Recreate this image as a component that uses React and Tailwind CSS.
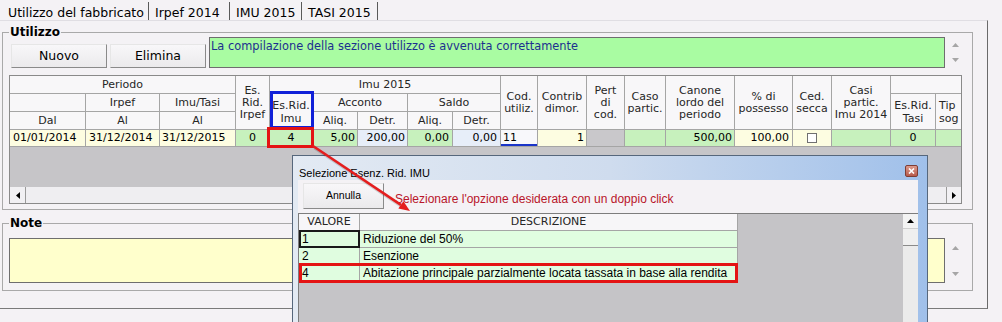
import React from "react";

const Tri = ({ dir, c = "#000", w = 7, h = 4 }) => {
  let d = "";
  if (dir === "up") d = `M0 ${h} L${w / 2} 0 L${w} ${h}Z`;
  if (dir === "down") d = `M0 0 L${w / 2} ${h} L${w} 0Z`;
  if (dir === "left") d = `M${w} 0 L0 ${h / 2} L${w} ${h}Z`;
  if (dir === "right") d = `M0 0 L${w} ${h / 2} L0 ${h}Z`;
  return (
    <svg width={w} height={h} viewBox={`0 0 ${w} ${h}`} className="block">
      <path d={d} fill={c} />
    </svg>
  );
};

const HC =
  "bg-[#f8f7f9] flex items-center justify-center text-center leading-[12px] text-[#262626]";
const DC = "flex items-center leading-[16px] text-black";

function Btn({ className, children }) {
  return (
    <div
      className={
        "flex items-center justify-center bg-linear-to-b from-[#f8f7f9] to-[#ebeaec] border border-t-[#e6e6e6] border-l-[#e6e6e6] border-r-[#8a8a8a] border-b-[#8a8a8a] " +
        className
      }
    >
      {children}
    </div>
  );
}

function Tabs() {
  return (
    <div className="flex h-[20px] text-[12.5px] leading-[15px] text-black">
      <div className="w-[148px] pl-[8px] pt-[5px] whitespace-nowrap">Utilizzo del fabbricato</div>
      <div className="w-px h-[18px] mt-[2px] bg-[#5a5a5a]" />
      <div className="w-[80px] pl-[6px] pt-[5px] whitespace-nowrap">Irpef 2014</div>
      <div className="w-px h-[18px] mt-[2px] bg-[#5a5a5a]" />
      <div className="w-[71px] pl-[6px] pt-[5px] whitespace-nowrap">IMU 2015</div>
      <div className="w-px h-[18px] mt-[2px] bg-[#5a5a5a]" />
      <div className="w-[75px] pl-[6px] pt-[5px] whitespace-nowrap">TASI 2015</div>
      <div className="w-px h-[18px] mt-[2px] bg-[#5a5a5a]" />
    </div>
  );
}

function DataGrid() {
  return (
    <div className="relative w-[953px] h-[129px] border border-[#8a8a8a] flex flex-col overflow-hidden">
      <div className="grid gap-px bg-[#a5a5a5] grid-cols-[75px_73px_75px_33px_42px_44px_49px_44px_47px_36px_48px_37px_40px_68px_57px_38px_58px_44px_25px] grid-rows-[17px_17px_17px_16px] text-[11px] shrink-0">
        <div className={`${HC} col-start-1 col-end-4 row-start-1 row-end-2`}>Periodo</div>
        <div className={`${HC} col-start-4 col-end-5 row-start-1 row-end-4`}>Es.<br />Rid.<br />Irpef</div>
        <div className={`${HC} col-start-5 col-end-10 row-start-1 row-end-2`}>Imu 2015</div>
        <div className={`${HC} col-start-10 col-end-11 row-start-1 row-end-4`}>Cod.<br />utiliz.</div>
        <div className={`${HC} col-start-11 col-end-12 row-start-1 row-end-4`}>Contrib<br />dimor.</div>
        <div className={`${HC} col-start-12 col-end-13 row-start-1 row-end-4`}>Pert<br />di<br />cod.</div>
        <div className={`${HC} col-start-13 col-end-14 row-start-1 row-end-4`}>Caso<br />partic.</div>
        <div className={`${HC} col-start-14 col-end-15 row-start-1 row-end-4`}>Canone<br />lordo del<br />periodo</div>
        <div className={`${HC} col-start-15 col-end-16 row-start-1 row-end-4`}>% di<br />possesso</div>
        <div className={`${HC} col-start-16 col-end-17 row-start-1 row-end-4`}>Ced.<br />secca</div>
        <div className={`${HC} col-start-17 col-end-18 row-start-1 row-end-4`}>Casi<br />partic.<br />Imu 2014</div>
        <div className={`${HC} col-start-18 col-end-20 row-start-1 row-end-2`}></div>

        <div className={`${HC} col-start-1 col-end-2 row-start-2 row-end-3`}></div>
        <div className={`${HC} col-start-2 col-end-3 row-start-2 row-end-3`}>Irpef</div>
        <div className={`${HC} col-start-3 col-end-4 row-start-2 row-end-3`}>Imu/Tasi</div>
        <div className={`${HC} col-start-5 col-end-6 row-start-2 row-end-4 leading-[13px]`}>Es.Rid.<br />Imu</div>
        <div className={`${HC} col-start-6 col-end-8 row-start-2 row-end-3`}>Acconto</div>
        <div className={`${HC} col-start-8 col-end-10 row-start-2 row-end-3`}>Saldo</div>
        <div className={`${HC} col-start-18 col-end-19 row-start-2 row-end-4 leading-[13px]`}>Es.Rid.<br />Tasi</div>
        <div className={`${HC} col-start-19 col-end-20 row-start-2 row-end-4 leading-[13px] !justify-start !text-left pl-[3px] whitespace-nowrap`}>Tip<br />sog</div>

        <div className={`${HC} col-start-1 col-end-2 row-start-3 row-end-4`}>Dal</div>
        <div className={`${HC} col-start-2 col-end-3 row-start-3 row-end-4`}>Al</div>
        <div className={`${HC} col-start-3 col-end-4 row-start-3 row-end-4`}>Al</div>
        <div className={`${HC} col-start-6 col-end-7 row-start-3 row-end-4`}>Aliq.</div>
        <div className={`${HC} col-start-7 col-end-8 row-start-3 row-end-4`}>Detr.</div>
        <div className={`${HC} col-start-8 col-end-9 row-start-3 row-end-4`}>Aliq.</div>
        <div className={`${HC} col-start-9 col-end-10 row-start-3 row-end-4`}>Detr.</div>

        <div className={`${DC} col-start-1 col-end-2 row-start-4 row-end-5 bg-[#fdfde1] pl-[3px]`}>01/01/2014</div>
        <div className={`${DC} col-start-2 col-end-3 row-start-4 row-end-5 bg-[#fdfde1] pl-[3px]`}>31/12/2014</div>
        <div className={`${DC} col-start-3 col-end-4 row-start-4 row-end-5 bg-[#fdfde1] pl-[2px]`}>31/12/2015</div>
        <div className={`${DC} col-start-4 col-end-5 row-start-4 row-end-5 bg-[#c7f1bd] justify-center`}>0</div>
        <div className={`${DC} col-start-5 col-end-6 row-start-4 row-end-5 bg-[#c7f1bd] justify-center`}>4</div>
        <div className={`${DC} col-start-6 col-end-7 row-start-4 row-end-5 bg-[#c7f1bd] justify-end pr-[2px]`}>5,00</div>
        <div className={`${DC} col-start-7 col-end-8 row-start-4 row-end-5 bg-[#e7eef9] justify-end pr-[2px]`}>200,00</div>
        <div className={`${DC} col-start-8 col-end-9 row-start-4 row-end-5 bg-[#c7f1bd] justify-end pr-[3px]`}>0,00</div>
        <div className={`${DC} col-start-9 col-end-10 row-start-4 row-end-5 bg-[#e7eef9] justify-end pr-[3px]`}>0,00</div>
        <div className={`${DC} col-start-10 col-end-11 row-start-4 row-end-5 bg-[#f8f8fb] pl-[2px] shadow-[inset_0_-2px_0_#1a35c8]`}>11</div>
        <div className={`${DC} col-start-11 col-end-12 row-start-4 row-end-5 bg-[#fdfde1] justify-end pr-[2px]`}>1</div>
        <div className={`${DC} col-start-12 col-end-13 row-start-4 row-end-5 bg-[#c9c8cb]`}></div>
        <div className={`${DC} col-start-13 col-end-14 row-start-4 row-end-5 bg-[#c7f1bd]`}></div>
        <div className={`${DC} col-start-14 col-end-15 row-start-4 row-end-5 bg-[#c7f1bd] justify-end pr-[2px]`}>500,00</div>
        <div className={`${DC} col-start-15 col-end-16 row-start-4 row-end-5 bg-[#fdfde1] justify-end pr-[3px]`}>100,00</div>
        <div className={`${DC} col-start-16 col-end-17 row-start-4 row-end-5 bg-[#fdfde1] justify-center`}>
          <div className="w-[10px] h-[10px] border border-[#707070] bg-white" />
        </div>
        <div className={`${DC} col-start-17 col-end-18 row-start-4 row-end-5 bg-[#c7f1bd]`}></div>
        <div className={`${DC} col-start-18 col-end-19 row-start-4 row-end-5 bg-[#c7f1bd] justify-center`}>0</div>
        <div className={`${DC} col-start-19 col-end-20 row-start-4 row-end-5 bg-[#c7f1bd]`}></div>
      </div>
      <div className="h-px bg-[#a5a5a5] shrink-0" />
      <div className="flex-1 bg-[#c6c5c8]" />
      <div className="h-[16px] flex bg-[#efeef1] shrink-0">
        <div className="w-[16px] h-full flex items-center justify-center border-r border-[#9a9a9a] bg-[#f1f0f3]">
          <Tri dir="left" w={4} h={7} />
        </div>
        <div className="flex-1" />
        <div className="w-[15px] h-full flex items-center justify-center border-l border-[#9a9a9a] bg-[#f1f0f3]">
          <Tri dir="right" w={4} h={7} />
        </div>
      </div>

      <div className="absolute left-[260px] top-[15px] w-[44px] h-[38px] border-[3px] border-[#1020d8]" />
      <div className="absolute left-[257px] top-[51px] w-[47px] h-[21px] border-[3px] border-[#e41414]" />
    </div>
  );
}

function Dialog() {
  return (
    <div className="absolute left-[292px] top-[155px] w-[636px] h-[200px] border border-[#56677c] bg-linear-to-r from-[#e3eaf3] via-[#cfdcee] to-[#a0c0ea] flex flex-col">
      <div className="h-[24px] flex items-start shrink-0">
        <div className="flex-1 pl-[6px] pt-[10px] text-[11px] leading-[14px] font-['Liberation_Sans',sans-serif] text-black whitespace-nowrap">
          Selezione Esenz. Rid. IMU
        </div>
        <div className="mt-[9px] mr-[9px] w-[13px] h-[12px] rounded-[2px] border border-[#7e3d33] bg-linear-to-b from-[#dc9a8c] to-[#b85a4b] flex items-center justify-center">
          <svg width="7" height="6" viewBox="0 0 7 6" className="block">
            <path d="M1 0.5 L6 5.5 M6 0.5 L1 5.5" stroke="#fff" strokeWidth="1.6" />
          </svg>
        </div>
      </div>
      <div className="flex-1 ml-[5px] mr-[9px] bg-[#f4f2f5] flex flex-col">
        <div className="h-[33px] flex items-start shrink-0">
          <Btn className="ml-[5px] mt-[3px] w-[81px] h-[26px] text-[10.5px] font-['Liberation_Sans',sans-serif] text-black">
            Annulla
          </Btn>
          <span className="ml-[11px] mt-[12px] text-[12px] leading-[14px] font-['Liberation_Sans',sans-serif] text-[#b8152a] whitespace-nowrap">
            Selezionare l'opzione desiderata con un doppio click
          </span>
        </div>
        <div className="flex-1 flex">
          <div className="relative flex-1 bg-[#c5c4c7] border-t border-l border-[#7d7d7d]">
            <div className="w-[439px] flex flex-col">
              <div className="h-[17px] flex border-b border-[#a5a5a5] bg-[#f7f6f8] text-[11px] leading-[16px] text-[#262626]">
                <div className="w-[61px] border-r border-[#a5a5a5] text-center">VALORE</div>
                <div className="flex-1 border-r border-[#a5a5a5] text-center">DESCRIZIONE</div>
              </div>
              {[
                ["1", "Riduzione del 50%"],
                ["2", "Esenzione"],
                ["4", "Abitazione principale parzialmente locata tassata in base alla rendita"],
              ].map(([v, d]) => (
                <div
                  key={v}
                  className="h-[17px] flex border-b border-[#a5a5a5] bg-[#e0fde0] text-[12px] leading-[16px] font-['Liberation_Sans',sans-serif] text-black"
                >
                  <div className="w-[61px] border-r border-[#a5a5a5] pl-[3px]">{v}</div>
                  <div className="flex-1 border-r border-[#a5a5a5] pl-[3px] whitespace-nowrap">{d}</div>
                </div>
              ))}
            </div>
            <div className="absolute left-0 top-[16px] w-[61px] h-[18px] border-2 border-[#1a1a1a]" />
            <div className="absolute left-0 top-[49px] w-[439px] h-[20px] border-[3px] border-[#e41414]" />
          </div>
          <div className="w-[15px] flex flex-col bg-[#ececec] border-t border-[#7d7d7d]">
            <div className="h-[15px] flex items-center justify-center bg-[#f3f3f3] border-b border-[#cfcfcf]">
              <Tri dir="up" w={7} h={4} />
            </div>
            <div className="h-[17px] bg-[#efefef] border-b border-[#8a8a8a]" />
            <div className="flex-1 bg-[#ebebeb]" />
          </div>
        </div>
      </div>
    </div>
  );
}

export default function App() {
  const tx = 410, ty = 211;
  const dx = 0.83, dy = 0.556;
  const bx = tx - 11 * dx, by = ty - 11 * dy;
  const p1 = `${bx - 4.5 * dy},${by + 4.5 * dx}`;
  const p2 = `${bx + 4.5 * dy},${by - 4.5 * dx}`;
  return (
    <div className="relative w-[1002px] h-[322px] overflow-hidden bg-[#f4f2f5] font-['DejaVu_Sans',sans-serif] text-black">
      <Tabs />
      <div className="w-[988px] h-[289px] border-t border-t-[#e0dee3] border-r border-r-[#6a6a6a] border-b border-b-[#7a7a7a]">
        {/* Utilizzo group */}
        <div className="ml-[2px] mt-[11px] w-[971px] h-[178px] border border-[#a9a9a9] pl-[6px]">
          <div className="-mt-[8px] w-fit px-[1px] bg-[#f4f2f5] font-bold text-[12px] leading-[14px]">Utilizzo</div>
          <div className="flex items-end h-[31px] -mt-[2px]">
            <Btn className="ml-[2px] w-[96px] h-[24px] text-[12.5px]">Nuovo</Btn>
            <Btn className="ml-[3px] w-[96px] h-[24px] text-[12.5px]">Elimina</Btn>
            <div className="ml-[3px] w-[736px] h-[31px] bg-[#a9fca2] border border-[#6e6e6e] pl-[1px] pt-[1px] text-[11.4px] leading-[14px] text-[#1c2f8f] whitespace-nowrap">
              La compilazione della sezione utilizzo è avvenuta correttamente
            </div>
            <div className="w-[18px] h-[31px] flex flex-col items-center justify-between pl-[3px] pt-[6px] pb-[6px]">
              <Tri dir="up" c="#a6a6a6" w={7} h={4} />
              <Tri dir="down" c="#a6a6a6" w={7} h={4} />
            </div>
          </div>
          <div className="mt-[7px]">
            <DataGrid />
          </div>
        </div>
        {/* Note group */}
        <div className="ml-[2px] mt-[13px] w-[971px] h-[68px] border border-[#a9a9a9] pl-[6px]">
          <div className="-mt-[8px] w-fit px-[1px] bg-[#f4f2f5] font-bold text-[12px] leading-[14px]">Note</div>
          <div className="flex mt-[8px]">
            <div className="w-[936px] h-[45px] bg-[#ffffcc] border border-[#6e6e6e]" />
            <div className="w-[20px] h-[45px] flex flex-col items-center justify-between pl-[1px] pt-[8px] pb-[7px]">
              <Tri dir="up" c="#a6a6a6" w={7} h={4} />
              <Tri dir="down" c="#a6a6a6" w={7} h={4} />
            </div>
          </div>
        </div>
      </div>

      <Dialog />

      <svg className="absolute left-0 top-0 pointer-events-none" width="1002" height="322">
        <line x1="314" y1="148" x2={bx + 1} y2={by + 2} stroke="#000" strokeOpacity="0.15" strokeWidth="2.5" />
        <line x1="313" y1="146" x2={bx} y2={by} stroke="#e41e1e" strokeWidth="2.5" />
        <polygon points={`${tx},${ty} ${p1} ${p2}`} fill="#e41e1e" />
      </svg>
    </div>
  );
}
